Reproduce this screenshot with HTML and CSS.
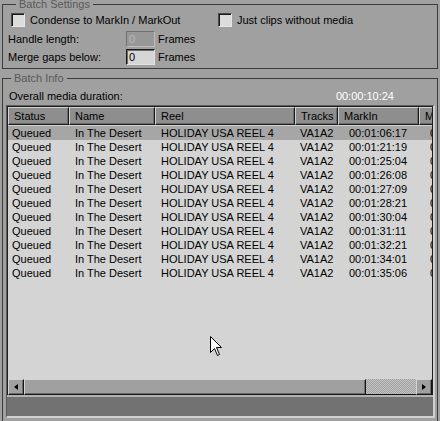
FILE: index.html
```html
<!doctype html>
<html lang="en">
  <head>
    <meta charset="utf-8" />
    <title>Batch Import</title>
    <link rel="stylesheet" href="styles.css">
  </head>
  <body>
    <!-- Batch Settings -->
    <fieldset class="group settings">
      <legend>Batch Settings</legend>
      <div class="checks">
        <label class="check check-wide"><span class="box"></span>Condense to MarkIn / MarkOut</label>
        <label class="check"><span class="box"></span>Just clips without media</label>
      </div>
      <div class="field first">
        <span class="field-label">Handle length:</span>
        <span class="input disabled">0</span>
        <span class="unit">Frames</span>
      </div>
      <div class="field">
        <span class="field-label">Merge gaps below:</span>
        <span class="input">0</span>
        <span class="unit">Frames</span>
      </div>
    </fieldset>

    <!-- Batch Info -->
    <fieldset class="group info">
      <legend>Batch Info</legend>
      <div class="duration">
        <span>Overall media duration:</span>
        <span class="duration-value">00:00:10:24</span>
      </div>
      <div class="panel">
        <div class="list">
          <div class="row header">
            <span class="cell">Status</span>
            <span class="cell">Name</span>
            <span class="cell">Reel</span>
            <span class="cell">Tracks</span>
            <span class="cell">MarkIn</span>
            <span class="cell">MarkOut</span>
          </div>
          <div class="row item selected">
            <span class="c-status">Queued</span><span class="c-name">In The Desert</span><span class="c-reel">HOLIDAY USA REEL 4</span><span class="c-tracks">VA1A2</span><span class="c-in">00:01:06:17</span><span class="c-out">00:01:08:02</span>
          </div>
          <div class="row item">
            <span class="c-status">Queued</span><span class="c-name">In The Desert</span><span class="c-reel">HOLIDAY USA REEL 4</span><span class="c-tracks">VA1A2</span><span class="c-in">00:01:21:19</span><span class="c-out">00:01:23:04</span>
          </div>
          <div class="row item">
            <span class="c-status">Queued</span><span class="c-name">In The Desert</span><span class="c-reel">HOLIDAY USA REEL 4</span><span class="c-tracks">VA1A2</span><span class="c-in">00:01:25:04</span><span class="c-out">00:01:26:01</span>
          </div>
          <div class="row item">
            <span class="c-status">Queued</span><span class="c-name">In The Desert</span><span class="c-reel">HOLIDAY USA REEL 4</span><span class="c-tracks">VA1A2</span><span class="c-in">00:01:26:08</span><span class="c-out">00:01:27:02</span>
          </div>
          <div class="row item">
            <span class="c-status">Queued</span><span class="c-name">In The Desert</span><span class="c-reel">HOLIDAY USA REEL 4</span><span class="c-tracks">VA1A2</span><span class="c-in">00:01:27:09</span><span class="c-out">00:01:28:14</span>
          </div>
          <div class="row item">
            <span class="c-status">Queued</span><span class="c-name">In The Desert</span><span class="c-reel">HOLIDAY USA REEL 4</span><span class="c-tracks">VA1A2</span><span class="c-in">00:01:28:21</span><span class="c-out">00:01:29:22</span>
          </div>
          <div class="row item">
            <span class="c-status">Queued</span><span class="c-name">In The Desert</span><span class="c-reel">HOLIDAY USA REEL 4</span><span class="c-tracks">VA1A2</span><span class="c-in">00:01:30:04</span><span class="c-out">00:01:31:03</span>
          </div>
          <div class="row item">
            <span class="c-status">Queued</span><span class="c-name">In The Desert</span><span class="c-reel">HOLIDAY USA REEL 4</span><span class="c-tracks">VA1A2</span><span class="c-in">00:01:31:11</span><span class="c-out">00:01:32:10</span>
          </div>
          <div class="row item">
            <span class="c-status">Queued</span><span class="c-name">In The Desert</span><span class="c-reel">HOLIDAY USA REEL 4</span><span class="c-tracks">VA1A2</span><span class="c-in">00:01:32:21</span><span class="c-out">00:01:33:18</span>
          </div>
          <div class="row item">
            <span class="c-status">Queued</span><span class="c-name">In The Desert</span><span class="c-reel">HOLIDAY USA REEL 4</span><span class="c-tracks">VA1A2</span><span class="c-in">00:01:34:01</span><span class="c-out">00:01:34:23</span>
          </div>
          <div class="row item">
            <span class="c-status">Queued</span><span class="c-name">In The Desert</span><span class="c-reel">HOLIDAY USA REEL 4</span><span class="c-tracks">VA1A2</span><span class="c-in">00:01:35:06</span><span class="c-out">00:01:36:12</span>
          </div>
          <div class="spacer"></div>
          <div class="hscroll">
            <span class="sb-button"><span class="arrow-left"></span></span>
            <span class="sb-thumb"></span>
            <span class="sb-track"></span>
            <span class="sb-button"><span class="arrow-right"></span></span>
          </div>
        </div>
        <div class="status-band"></div>
      </div>
    </fieldset>

    <!-- Mouse pointer -->
    <svg class="pointer" width="13" height="21" viewBox="0 0 13 21">
      <polygon points="0.5,0.5 0.5,16.5 4.5,12.5 7.5,19.5 9.5,18.5 6.5,11.5 11.5,11.5" fill="#fff" stroke="#000" stroke-width="1" />
    </svg>
  </body>
</html>
```

FILE: styles.css
```css
* {
  box-sizing: border-box;
}

html,
body {
  margin: 0;
  height: 100%;
  overflow: hidden;
}

body {
  position: relative;
  background: #a0a0a0;
  color: #000;
  font-family: 'Liberation Sans', Arial, sans-serif;
  font-size: 11px;
  line-height: 13px;
}

/* Group boxes */

.group {
  margin: 0 2px;
  padding: 0;
  min-width: 0;
  border: 1px solid #3c3c3c;
}

.group legend {
  margin-left: 8px;
  padding: 0 3px;
  line-height: 13px;
  color: #5a5a5a;
}

.settings {
  margin-top: -2px;
  padding: 2px 0 3px 5px;
}

.info {
  margin-top: 3px;
  padding-bottom: 8px;
}

/* Checkboxes */

.checks {
  display: flex;
  height: 14px;
  margin-left: 3px;
}

.check {
  display: flex;
  align-items: center;
  gap: 5px;
}

.check-wide {
  width: 207px;
}

.box {
  width: 14px;
  height: 14px;
  background: #dcdcdc;
  border: 1px solid;
  border-color: #4a4a4a #e6e6e6 #e6e6e6 #4a4a4a;
  box-shadow: inset 1px 1px 0 #1a1a1a;
}

/* Numeric fields */

.field {
  display: flex;
  align-items: center;
  height: 16px;
  margin-top: 2px;
}

.field.first {
  margin-top: 4px;
}

.field-label {
  width: 118px;
}

.input {
  width: 29px;
  height: 16px;
  padding-left: 2px;
  background: #d6d6d6;
  border: 1px solid;
  border-color: #1a1a1a #e2e2e2 #e2e2e2 #1a1a1a;
  box-shadow: inset 1px 1px 0 #6a6a6a;
  line-height: 14px;
}

.input.disabled {
  background: #989898;
  color: #b8b8b8;
  border-color: #707070 #bcbcbc #bcbcbc #707070;
  box-shadow: none;
}

.unit {
  margin-left: 3px;
}

/* Batch info */

.duration {
  display: flex;
  justify-content: space-between;
  margin-top: 5px;
  padding: 0 43px 0 6px;
}

.duration-value {
  color: #fff;
}

.panel {
  margin: 2px 2px 0 3px;
  border-top: 1px solid #5c5c5c;
  border-left: 1px solid #5c5c5c;
  border-right: 2px solid #d0d0d0;
  border-bottom: 2px solid #d0d0d0;
}

.list {
  display: flex;
  flex-direction: column;
  height: 289px;
  overflow: hidden;
  background: #d4d4d4;
  border: 1px solid #1e1e1e;
  border-bottom: none;
}

.row {
  display: grid;
  grid-template-columns: 61px 86px 140px 43px 81px 80px;
  flex: none;
  white-space: nowrap;
}

.header {
  height: 18px;
  margin-bottom: 1px;
}

.header .cell {
  padding: 2px 0 0 5px;
  background: #8e8e8e;
  border: 1px solid;
  border-color: #d0d0d0 #1a1a1a #1a1a1a #d0d0d0;
  box-shadow: inset -1px -1px 0 #6c6c6c;
  overflow: hidden;
}

.item {
  height: 14px;
  line-height: 14px;
}

.item span {
  overflow: hidden;
}

.item.selected {
  background: #a6a6a6;
}

.c-status {
  padding-left: 4px;
}

.c-name,
.c-reel {
  padding-left: 6px;
}

.c-tracks {
  padding-left: 5px;
}

.c-in,
.c-out {
  padding-left: 11px;
}

.spacer {
  flex: 1;
}

/* Horizontal scrollbar */

.hscroll {
  display: flex;
  flex: none;
  height: 16px;
}

.sb-button {
  display: flex;
  align-items: center;
  justify-content: center;
  width: 16px;
  background: #a0a0a0;
  border: 1px solid;
  border-color: #d4d4d4 #141414 #141414 #d4d4d4;
  box-shadow: inset -1px -1px 0 #6c6c6c;
}

.arrow-left {
  width: 0;
  height: 0;
  border-style: solid;
  border-width: 3.5px 4px 3.5px 0;
  border-color: transparent #000 transparent transparent;
}

.arrow-right {
  width: 0;
  height: 0;
  border-style: solid;
  border-width: 3.5px 0 3.5px 4px;
  border-color: transparent transparent transparent #000;
}

.sb-thumb {
  width: 342px;
  background: #a0a0a0;
  border: 1px solid;
  border-color: #d4d4d4 #141414 #141414 #d4d4d4;
  box-shadow: inset -1px -1px 0 #6c6c6c;
}

.sb-track {
  flex: 1;
  background: repeating-conic-gradient(#c4c4c4 0 25%, #a0a0a0 0 50%) 0 0 / 2px 2px;
  border-bottom: 1px solid #141414;
}

.status-band {
  height: 21px;
  background: #727272;
  border-top: 2px solid #b2b2b2;
}

.pointer {
  position: absolute;
  left: 210px;
  top: 336px;
}
```
